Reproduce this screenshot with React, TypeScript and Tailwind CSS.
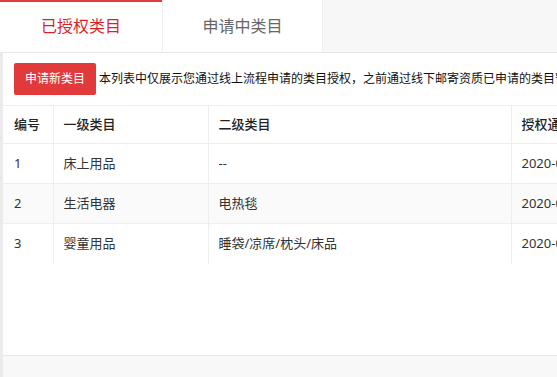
const rows = [
  { id: 1, first: '床上用品', second: '--', time: '2020-05-20 10:35:22' },
  { id: 2, first: '生活电器', second: '电热毯', time: '2020-05-20 10:35:22' },
  { id: 3, first: '婴童用品', second: '睡袋/凉席/枕头/床品', time: '2020-05-20 10:35:22' },
];

export default function App() {
  return (
    <div className="h-[377px] w-[557px] overflow-hidden bg-[#ebebeb] font-['Noto_Sans','Noto_Sans_CJK_SC',sans-serif] text-[#333]">
      <div className="flex h-[52px] bg-[#f7f7f7]">
        <div className="flex w-[162px] items-center justify-center border-t-2 border-[#e23b3b] bg-white pb-[2px] text-[16px] text-[#dd1f2a]">
          已授权类目
        </div>
        <div className="flex w-[161px] items-center justify-center border-r border-l border-[#eeeeee] bg-white text-[16px] text-[#666]">
          申请中类目
        </div>
      </div>

      <div className="ml-[3px] flex h-[303px] flex-col border-t border-[#e8e8e8] bg-white">
        <div className="flex items-center gap-[3px] whitespace-nowrap px-[11px] py-[10px]">
          <button className="h-[32px] w-[82px] shrink-0 rounded-[2px] bg-[#e23a3a] text-[12px] text-white">
            申请新类目
          </button>
          <span className="text-[12px] text-[#111]">
            本列表中仅展示您通过线上流程申请的类目授权，之前通过线下邮寄资质已申请的类目暂不在此展示
          </span>
        </div>

        <table className="w-[800px] table-fixed border-collapse border-t border-[#eeeeee] text-left text-[13px]">
          <colgroup>
            <col className="w-[50px]" />
            <col className="w-[155px]" />
            <col className="w-[303px]" />
            <col className="w-[292px]" />
          </colgroup>
          <thead>
            <tr className="h-[38px] border-b border-[#eeeeee] text-[#222]">
              <th className="border-r border-[#eeeeee] pl-[11px] font-medium">编号</th>
              <th className="border-r border-[#eeeeee] pl-[10px] font-medium">一级类目</th>
              <th className="border-r border-[#eeeeee] pl-[10px] font-medium">二级类目</th>
              <th className="pl-[10px] font-medium">授权通过时间</th>
            </tr>
          </thead>
          <tbody>
            {rows.map((r, i) => (
              <tr
                key={r.id}
                className={`h-[40px] ${i === 1 ? 'bg-[#fafafa]' : ''} ${i < rows.length - 1 ? 'border-b border-[#eeeeee]' : ''}`}
              >
                <td className="border-r border-[#eeeeee] pl-[11px]">{r.id}</td>
                <td className="border-r border-[#eeeeee] pl-[10px]">{r.first}</td>
                <td className="border-r border-[#eeeeee] pl-[10px]">{r.second}</td>
                <td className="whitespace-nowrap pl-[10px]">{r.time}</td>
              </tr>
            ))}
          </tbody>
        </table>
        <div className="flex-1" />
      </div>

      <div className="ml-[3px] h-[22px] border-t border-[#e8e8e8] bg-[#f8f8f8]" />
    </div>
  );
}
